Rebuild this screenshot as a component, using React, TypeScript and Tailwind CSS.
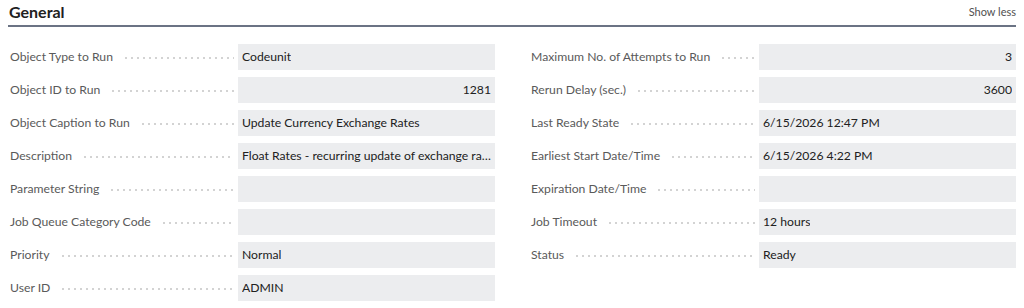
const font = { fontFamily: 'Lato, "Noto Sans", sans-serif' };

interface Field {
  label: string;
  value?: string;
  numeric?: boolean;
}

const leftFields: Field[] = [
  { label: "Object Type to Run", value: "Codeunit" },
  { label: "Object ID to Run", value: "1281", numeric: true },
  { label: "Object Caption to Run", value: "Update Currency Exchange Rates" },
  { label: "Description", value: "Float Rates - recurring update of exchange rates" },
  { label: "Parameter String" },
  { label: "Job Queue Category Code" },
  { label: "Priority", value: "Normal" },
  { label: "User ID", value: "ADMIN" },
];

const rightFields: Field[] = [
  { label: "Maximum No. of Attempts to Run", value: "3", numeric: true },
  { label: "Rerun Delay (sec.)", value: "3600", numeric: true },
  { label: "Last Ready State", value: "6/15/2026 12:47 PM" },
  { label: "Earliest Start Date/Time", value: "6/15/2026 4:22 PM" },
  { label: "Expiration Date/Time" },
  { label: "Job Timeout", value: "12 hours" },
  { label: "Status", value: "Ready" },
];

function FieldRow({ label, value, numeric }: Field) {
  return (
    <div className="flex items-center h-[26px] mb-[7px]">
      <div className="flex items-center w-[229px] shrink-0 pl-px">
        <span className="text-[12.2px] text-[#5a5a5a] whitespace-nowrap">{label}</span>
        <span className="flex-1 h-[2px] ml-[10px] mr-[4px] mt-[3px] bg-[radial-gradient(circle,#d2d2d2_0.7px,transparent_1px)] bg-[length:6px_2px] bg-repeat-x" />
      </div>
      <div
        className={`flex items-center h-[26px] w-[257px] bg-[#ecedef] px-[4px] text-[12.2px] text-[#212121] overflow-hidden ${
          numeric ? "justify-end" : ""
        }`}
      >
        <span className="truncate">{value}</span>
      </div>
    </div>
  );
}

export default function App() {
  return (
    <div className="w-[1024px] h-[308px] bg-white px-[8px] pt-[1px]" style={font}>
      <div className="flex items-end justify-between h-[26px] border-b-2 border-[#6b7384] pb-[5px]">
        <h2 className="text-[16px] font-bold text-[#212121] leading-none pl-px">General</h2>
        <span className="text-[11px] text-[#505050] leading-none mb-[3px]">Show less</span>
      </div>
      <div className="flex justify-between pt-[17px] pl-px">
        <div className="flex flex-col">
          {leftFields.map((f) => (
            <FieldRow key={f.label} {...f} />
          ))}
        </div>
        <div className="flex flex-col">
          {rightFields.map((f) => (
            <FieldRow key={f.label} {...f} />
          ))}
        </div>
      </div>
    </div>
  );
}
